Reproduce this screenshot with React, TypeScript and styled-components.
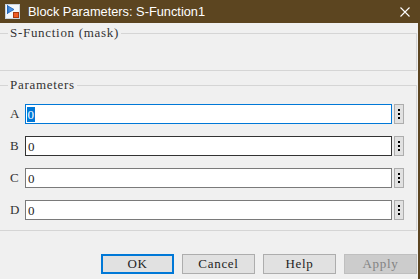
import React from "react";
import styled, { createGlobalStyle } from "styled-components";

const Global = createGlobalStyle`
  html, body { margin: 0; padding: 0; background: #f0f0f0; }
  body { width: 420px; height: 279px; overflow: hidden; }
`;

const serif = `"Liberation Serif", "Times New Roman", serif`;

const Window = styled.div`
  width: 420px;
  height: 279px;
  display: flex;
  flex-direction: column;
  background: #f0f0f0;
  overflow: hidden;
`;

const TitleBar = styled.div`
  height: 23px;
  flex: none;
  background: #5c4520;
  display: flex;
  align-items: center;
  padding: 0 10px 0 5px;
  gap: 8px;
`;

const TitleText = styled.div`
  flex: 1;
  color: #ffffff;
  font-family: "Liberation Sans", Arial, sans-serif;
  font-size: 12.8px;
  line-height: 16px;
  white-space: nowrap;
`;

const Body = styled.div`
  flex: 1;
  display: flex;
  flex-direction: column;
  border-right: 2px solid #5c4520;
  padding: 3px 1px 0 0;
`;

const Group = styled.fieldset<{ $h: number; $mt: number }>`
  margin: ${(p) => p.$mt}px 0 0 -1px;
  padding: 0;
  border: 1px solid #d5d5d5;
  height: ${(p) => p.$h}px;
  box-sizing: border-box;
  min-width: 0;
`;

const Legend = styled.legend`
  margin-left: 8px;
  padding: 0 2px;
  font-family: ${serif};
  font-size: 13px;
  letter-spacing: 0.7px;
  line-height: 14px;
  color: #333333;
`;

const Rows = styled.div`
  display: flex;
  flex-direction: column;
  gap: 12px;
  padding: 12px 12px 0 10px;
`;

const Row = styled.div`
  display: flex;
  align-items: center;
  height: 20px;
`;

const Label = styled.div`
  width: 15px;
  flex: none;
  font-family: ${serif};
  font-size: 13px;
  color: #333333;
  line-height: 14px;
`;

const Field = styled.div<{ $state: "focus" | "hover" | "normal" }>`
  flex: 1;
  height: 20px;
  box-sizing: border-box;
  background: #ffffff;
  border: 1px solid
    ${(p) => (p.$state === "focus" ? "#0078d7" : p.$state === "hover" ? "#333333" : "#7a7a7a")};
  display: flex;
  align-items: center;
  padding-left: 1px;
  font-family: ${serif};
  font-size: 13px;
  color: #1e1e1e;
`;

const Sel = styled.span`
  background: #0078d7;
  color: #ffffff;
  line-height: 15px;
  padding: 0 0.5px;
`;

const Plain = styled.span`
  line-height: 15px;
  padding-left: 1px;
`;

const MoreBtn = styled.div`
  width: 10px;
  height: 20px;
  margin-left: 2px;
  flex: none;
  box-sizing: border-box;
  border: 1px solid #adadad;
  background: #e1e1e1;
  display: flex;
  flex-direction: column;
  align-items: center;
  justify-content: center;
  gap: 2px;
`;

const Dot = styled.span`
  width: 2px;
  height: 2px;
  background: #000;
`;

const Buttons = styled.div`
  display: flex;
  justify-content: flex-end;
  gap: 8px;
  margin-top: 23px;
`;

const Btn = styled.div<{ $kind?: "default" | "disabled" }>`
  width: 73px;
  height: 20px;
  box-sizing: border-box;
  display: flex;
  align-items: center;
  justify-content: center;
  font-family: ${serif};
  font-size: 13px;
  letter-spacing: 0.7px;
  background: ${(p) => (p.$kind === "disabled" ? "#cccccc" : "#e1e1e1")};
  color: ${(p) => (p.$kind === "disabled" ? "#838383" : "#1e1e1e")};
  border: ${(p) =>
    p.$kind === "default"
      ? "2px solid #0078d7"
      : p.$kind === "disabled"
      ? "1px solid #bfbfbf"
      : "1px solid #adadad"};
`;

const AppIcon = () => (
  <svg width="15" height="15" viewBox="0 0 15 15">
    <rect x="0.5" y="0.5" width="14" height="14" fill="#f4f7fb" stroke="#c9d3df" />
    <line x1="2.5" y1="1" x2="2.5" y2="10" stroke="#2d6fc0" />
    <path d="M3 2 L9 5.5 L3 9 Z" fill="#4a90e2" stroke="#1e5fae" strokeWidth="0.8" />
    <rect x="8.5" y="8.5" width="5" height="5" fill="#ef5a24" stroke="#a8380e" />
  </svg>
);

const CloseIcon = () => (
  <svg width="10" height="10" viewBox="0 0 10 10">
    <path d="M0.5 0.5 L9.5 9.5 M9.5 0.5 L0.5 9.5" stroke="#ffffff" strokeWidth="1.1" />
  </svg>
);

const params = ["A", "B", "C", "D"];
const states: Array<"focus" | "hover" | "normal"> = ["focus", "hover", "normal", "normal"];

export default function App() {
  return (
    <Window>
      <Global />
      <TitleBar>
        <AppIcon />
        <TitleText>Block Parameters: S-Function1</TitleText>
        <CloseIcon />
      </TitleBar>
      <Body>
        <Group $h={45} $mt={0}>
          <Legend>S-Function (mask)</Legend>
        </Group>
        <Group $h={153} $mt={7}>
          <Legend>Parameters</Legend>
          <Rows>
            {params.map((p, i) => (
              <Row key={p}>
                <Label>{p}</Label>
                <Field $state={states[i]}>
                  {i === 0 ? <Sel>0</Sel> : <Plain>0</Plain>}
                </Field>
                <MoreBtn>
                  <Dot />
                  <Dot />
                  <Dot />
                </MoreBtn>
              </Row>
            ))}
          </Rows>
        </Group>
        <Buttons>
          <Btn $kind="default">OK</Btn>
          <Btn>Cancel</Btn>
          <Btn>Help</Btn>
          <Btn $kind="disabled">Apply</Btn>
        </Buttons>
      </Body>
    </Window>
  );
}
